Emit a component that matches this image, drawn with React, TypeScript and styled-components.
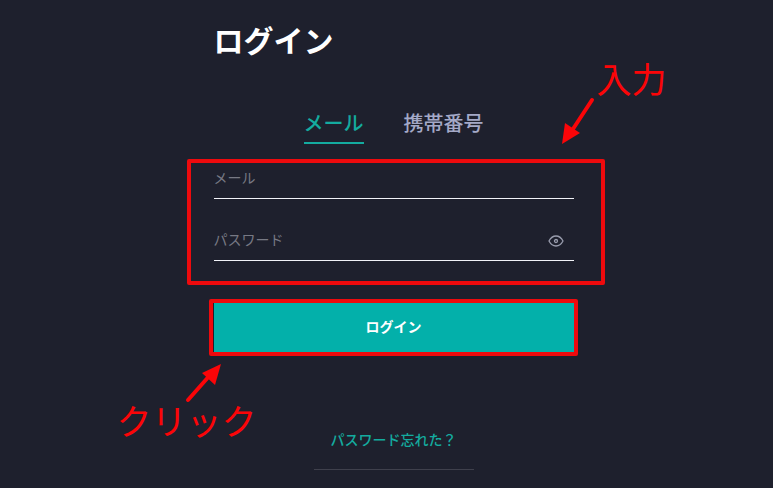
import React, { useState } from "react";
import styled, { createGlobalStyle } from "styled-components";

const GlobalStyle = createGlobalStyle`
  *, *::before, *::after { box-sizing: border-box; }
  body {
    margin: 0;
    background: #1e202d;
    font-family: "Noto Sans CJK JP", sans-serif;
  }
  button, input { font: inherit; }
`;

const Page = styled.main`
  min-height: 100vh;
  display: flex;
  justify-content: center;
  padding: 19px 16px 16px 30px;
  overflow: hidden;
`;

const Form = styled.form`
  width: 100%;
  max-width: 360px;
  display: flex;
  flex-direction: column;
`;

const Title = styled.h1`
  margin: 0 0 49px;
  color: #fff;
  font-size: 30px;
  font-weight: 700;
  line-height: 40px;
`;

const Tabs = styled.div`
  display: flex;
  justify-content: center;
  gap: 40px;
`;

const Tab = styled.button<{ $active: boolean }>`
  height: 36px;
  padding: 0 0 4px;
  border: 0;
  border-bottom: 2px solid ${(p) => (p.$active ? "#14ab9f" : "transparent")};
  background: none;
  color: ${(p) => (p.$active ? "#14ab9f" : "#a4a9c7")};
  font-size: 20px;
  font-weight: 500;
  line-height: 30px;
  cursor: pointer;
`;

const Fields = styled.div`
  position: relative;
  display: grid;
  gap: 22px;
  margin-top: 15px;
`;

const Field = styled.div`
  display: flex;
  align-items: center;
  height: 40px;
  border-bottom: 1px solid #f2f3f8;
`;

const Input = styled.input`
  flex: 1;
  min-width: 0;
  height: 36px;
  padding: 0 0 4px;
  border: 0;
  outline: 0;
  background: none;
  color: #fff;
  font-size: 14px;
  &::placeholder { color: #777984; opacity: 1; }
`;

const EyeButton = styled.button`
  display: flex;
  margin-right: 10px;
  padding: 0;
  border: 0;
  background: none;
  color: #999cad;
  cursor: pointer;
`;

const Action = styled.div`
  position: relative;
  margin-top: 42px;
`;

const Submit = styled.button`
  display: block;
  width: 100%;
  height: 50px;
  padding: 0 0 4px;
  border: 0;
  background: #03b0aa;
  color: #fff;
  font-size: 14px;
  font-weight: 700;
  cursor: pointer;
`;

const Forgot = styled.footer`
  align-self: center;
  width: 160px;
  margin-top: 75px;
  padding-bottom: 19px;
  border-bottom: 1px solid #3f404c;
  text-align: center;
`;

const ForgotLink = styled.a`
  display: block;
  color: #14ab9f;
  font-size: 14px;
  font-weight: 500;
  line-height: 22px;
  text-decoration: none;
`;

const Highlight = styled.div`
  position: absolute;
  border: 4px solid #ee0a0d;
  border-radius: 2px;
  pointer-events: none;
`;

const FieldsHighlight = styled(Highlight)`
  inset: 0 -31px -24px -27px;
`;

const ActionHighlight = styled(Highlight)`
  inset: -4px -4px -3px -5px;
`;

const Note = styled.span`
  position: absolute;
  color: #fb0508;
  font-size: 35px;
  font-weight: 400;
  line-height: 40px;
  white-space: nowrap;
  pointer-events: none;
`;

const InputNote = styled(Note)`
  right: -93px;
  top: -101px;
`;

const ClickNote = styled(Note)`
  left: -97px;
  top: 97px;
`;

const Arrow = styled.svg`
  position: absolute;
  overflow: visible;
  pointer-events: none;
`;

const InputArrow = styled(Arrow)`
  right: -20px;
  top: -62px;
`;

const ClickArrow = styled(Arrow)`
  left: -28px;
  top: 61px;
`;

export default function App() {
  const [tab, setTab] = useState("mail");
  const [visible, setVisible] = useState(false);
  return (
    <>
      <GlobalStyle />
      <Page>
        <Form onSubmit={(e) => e.preventDefault()}>
          <Title>ログイン</Title>
          <Tabs role="tablist">
            <Tab type="button" role="tab" aria-selected={tab === "mail"} $active={tab === "mail"} onClick={() => setTab("mail")}>
              メール
            </Tab>
            <Tab type="button" role="tab" aria-selected={tab === "phone"} $active={tab === "phone"} onClick={() => setTab("phone")}>
              携帯番号
            </Tab>
          </Tabs>
          <Fields>
            <Field>
              <Input type="email" aria-label="メール" placeholder="メール" />
            </Field>
            <Field>
              <Input type={visible ? "text" : "password"} aria-label="パスワード" placeholder="パスワード" />
              <EyeButton type="button" aria-label="パスワードを表示" onClick={() => setVisible(!visible)}>
                <svg width="16" height="12" viewBox="0 0 16 12" fill="none" stroke="currentColor" strokeWidth="1.3">
                  <path d="M1 6C2.800 2.600 5.200 1 8 1s5.200 1.600 7 5c-1.800 3.400-4.200 5-7 5S2.800 9.400 1 6Z" strokeLinejoin="round" />
                  <circle cx="8" cy="6" r="1.500" />
                </svg>
              </EyeButton>
            </Field>
            <FieldsHighlight />
            <InputNote>入力</InputNote>
            <InputArrow width="32" height="48" viewBox="0 0 32 48" fill="#fb0508">
              <path d="M30 3 11 32" stroke="#fb0508" strokeWidth="4" strokeLinecap="round" />
              <path d="M0 47 3 26 18 36Z" />
            </InputArrow>
          </Fields>
          <Action>
            <Submit type="submit">ログイン</Submit>
            <ActionHighlight />
            <ClickArrow width="36" height="40" viewBox="0 0 36 40" fill="#fb0508">
              <path d="M2 36 25 10" stroke="#fb0508" strokeWidth="4" strokeLinecap="round" />
              <path d="M35 0 29 21 16 9Z" />
            </ClickArrow>
            <ClickNote>クリック</ClickNote>
          </Action>
          <Forgot>
            <ForgotLink href="#forgot">パスワード忘れた？</ForgotLink>
          </Forgot>
        </Form>
      </Page>
    </>
  );
}
